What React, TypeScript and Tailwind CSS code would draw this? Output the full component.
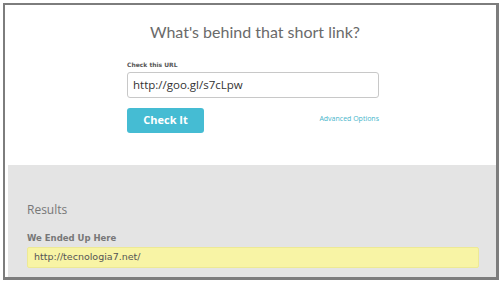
import React from 'react';

export default function App() {
  return (
    <div className="w-[500px] h-[282px] bg-white pl-[3px] pt-[3px] pr-[1px] pb-[2px]">
      <div className="h-full flex flex-col border-l-2 border-t-2 border-r-[3px] border-b-[3px] border-[#7d7d7d]">
        {/* верхняя часть: форма проверки ссылки */}
        <div className="h-[160px] shrink-0 bg-white">
          <h1 className="pt-[16px] text-center text-[16px] leading-[22px] text-[#6a6a6a] font-['Lato',sans-serif] pl-[9px]">
            What's behind that short link?
          </h1>
          <div className="ml-[122px] w-[252px] mt-[18px]">
            <div className="text-[6px] leading-[8px] font-bold text-[#555] font-['DejaVu_Sans',sans-serif]">
              Check this URL
            </div>
            <div className="mt-[3px] h-[26px] rounded-[3px] border border-[#c8c8c8] flex items-center px-[5px] text-[11.5px] text-[#333] font-['Open_Sans',sans-serif]">
              http://goo.gl/s7cLpw
            </div>
            <div className="mt-[10px] flex items-center justify-between">
              <button className="w-[77px] h-[25px] rounded-[3px] bg-[#45bcd3] text-white text-[11px] font-bold font-['Open_Sans',sans-serif]">
                Check It
              </button>
              <span className="text-[7px] text-[#48b6cb] font-['Open_Sans',sans-serif] mb-[3px]">
                Advanced Options
              </span>
            </div>
          </div>
        </div>

        {/* нижняя часть: результаты */}
        <div className="flex-1 ml-[3px] bg-[#e4e4e4] pl-[19px] pr-[17px]">
          <div className="pt-[37px] text-[12px] leading-[16px] text-[#777] font-['Open_Sans',sans-serif]">
            Results
          </div>
          <div className="mt-[14px] text-[8.5px] leading-[12px] font-bold text-[#777] font-['DejaVu_Sans',sans-serif]">
            We Ended Up Here
          </div>
          <div className="mt-[3px] h-[21px] rounded-[2px] border border-[#ede995] bg-[#f8f4a5] flex items-center px-[6px] text-[9.5px] text-[#555] font-['DejaVu_Sans',sans-serif]">
            http://tecnologia7.net/
          </div>
        </div>
      </div>
    </div>
  );
}
